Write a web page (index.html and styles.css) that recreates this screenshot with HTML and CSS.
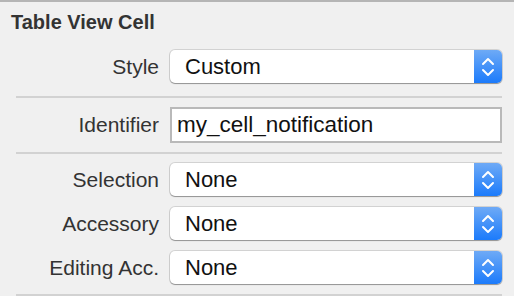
FILE: index.html
```html
<!DOCTYPE html>
<html lang="en">
<head>
  <meta charset="UTF-8" />
  <title>Table View Cell</title>
  <link rel="stylesheet" href="styles.css">
</head>
<body>
  <div class="inspector">
    <h2 class="title">Table View Cell</h2>

    <div class="section first">
      <div class="row">
        <span class="label">Style</span>
        <div class="popup">
          <span class="value">Custom</span>
          <span class="arrows">
            <svg width="14" height="20" viewBox="0 0 14 20"><path d="M2 7 L7 2 L12 7 M2 13 L7 18 L12 13" fill="none" stroke="#fff" stroke-width="2" stroke-linecap="round" stroke-linejoin="round"/></svg>
          </span>
        </div>
      </div>
    </div>

    <div class="section">
      <div class="row">
        <span class="label">Identifier</span>
        <input class="field" type="text" value="my_cell_notification">
      </div>
    </div>

    <div class="section list">
      <div class="row">
        <span class="label">Selection</span>
        <div class="popup">
          <span class="value">None</span>
          <span class="arrows">
            <svg width="14" height="20" viewBox="0 0 14 20"><path d="M2 7 L7 2 L12 7 M2 13 L7 18 L12 13" fill="none" stroke="#fff" stroke-width="2" stroke-linecap="round" stroke-linejoin="round"/></svg>
          </span>
        </div>
      </div>
      <div class="row">
        <span class="label">Accessory</span>
        <div class="popup">
          <span class="value">None</span>
          <span class="arrows">
            <svg width="14" height="20" viewBox="0 0 14 20"><path d="M2 7 L7 2 L12 7 M2 13 L7 18 L12 13" fill="none" stroke="#fff" stroke-width="2" stroke-linecap="round" stroke-linejoin="round"/></svg>
          </span>
        </div>
      </div>
      <div class="row">
        <span class="label">Editing Acc.</span>
        <div class="popup">
          <span class="value">None</span>
          <span class="arrows">
            <svg width="14" height="20" viewBox="0 0 14 20"><path d="M2 7 L7 2 L12 7 M2 13 L7 18 L12 13" fill="none" stroke="#fff" stroke-width="2" stroke-linecap="round" stroke-linejoin="round"/></svg>
          </span>
        </div>
      </div>
    </div>
  </div>
</body>
</html>
```

FILE: styles.css
```css
:root {
  --bg:        #f0f0f0;
  --top-line:  #b5b5b5;
  --sep:       #d2d2d2;
  --label:     #333;
  --blue-top:  #6eaaf6;
  --blue-bot:  #1c7bfb;
}

* { box-sizing: border-box; margin: 0; padding: 0; }

html, body {
  height: 100%;
  background: var(--bg);
  font-family: "Liberation Sans", Arial, sans-serif;
}

.inspector {
  border-top: 2px solid var(--top-line);
  padding-right: 12px;
}

.title {
  font-size: 20px;
  font-weight: bold;
  color: #333;
  line-height: 24px;
  padding: 8px 0 0 11px;
}

/* === secoes separadas por linha === */
.section {
  margin-left: 16px;
  border-bottom: 2px solid var(--sep);
  padding: 9px 0;
}
.section.first {
  padding: 16px 0 13px;
}
.section.list {
  padding: 9px 0 10px;
  display: flex;
  flex-direction: column;
  gap: 11px;
}

.row {
  display: grid;
  grid-template-columns: 143px 1fr;
  column-gap: 11px;
  align-items: center;
}

.label {
  text-align: right;
  font-size: 21px;
  color: var(--label);
}

/* === popup button === */
.popup {
  display: flex;
  height: 33px;
  background: #fff;
  border-radius: 5px;
  box-shadow: 0 0 0 1px rgba(0,0,0,0.12), 0 1px 1px rgba(0,0,0,0.3);
  overflow: hidden;
}
.popup .value {
  flex: 1;
  font-size: 22px;
  color: #111;
  line-height: 33px;
  padding-left: 15px;
}
.popup .arrows {
  width: 28px;
  display: flex;
  align-items: center;
  justify-content: center;
  background: linear-gradient(to bottom, var(--blue-top), var(--blue-bot));
}

/* === campo de texto === */
.field {
  height: 36px;
  border: 2px solid #b9b9b9;
  background: #fff;
  font-family: inherit;
  font-size: 22.5px;
  color: #111;
  padding: 0 5px;
  outline: none;
}
```
